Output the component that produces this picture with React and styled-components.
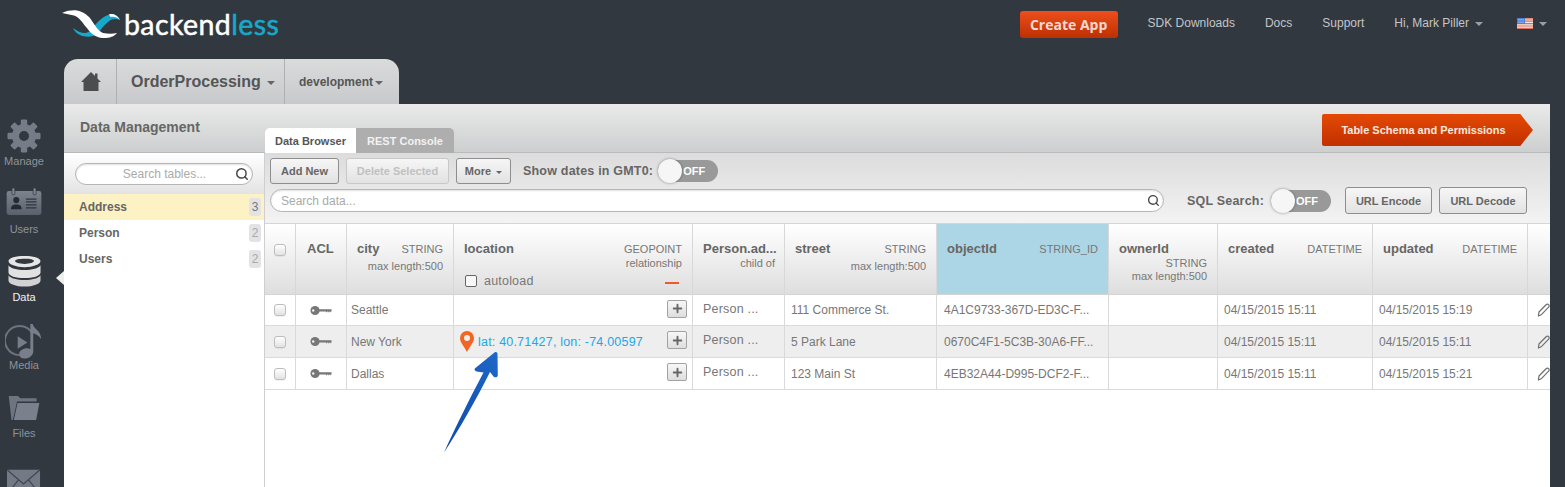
import React from "react";
import styled, { createGlobalStyle } from "styled-components";
import { Search, Plus } from "lucide-react";

const Global = createGlobalStyle`
  html, body { margin: 0; padding: 0; height: 487px; overflow: hidden; background: #323840; }
  body { font-family: "Liberation Sans", Arial, sans-serif; }
  * { box-sizing: border-box; }
`;

const Page = styled.div`
  width: 1565px; height: 487px; overflow: hidden; position: relative;
  display: flex; flex-direction: column; background: #323840;
`;
const TopBar = styled.header`
  height: 59px; flex: none; display: flex; align-items: flex-start; padding: 10px 18px 0 62px;
`;
const Logo = styled.div`display: flex; align-items: flex-start; gap: 2px;`;
const LogoText = styled.div`
  font: 400 28.5px/30px Lato, sans-serif; color: #fff; letter-spacing: .4px; margin-top: -1px;
  -webkit-text-stroke: .5px currentColor;
  span { color: #17a9c9; }
`;
const Nav = styled.nav`
  margin-left: auto; display: flex; align-items: center; height: 27px; margin-top: 1px;
`;
const CreateApp = styled.button`
  width: 98px; height: 27px; border: 0; border-radius: 3px; padding: 0; margin-right: 30px;
  background: linear-gradient(#ee4e1c, #bd3002); color: #f1d9cf;
  font: 700 14px "Open Sans", sans-serif;
`;
const NavLink = styled.span`
  font-size: 12px; color: #c2c5c9; margin-right: ${p => p.$mr}px; display: flex; align-items: center; margin-top: -3px;
`;
const Caret = styled.i`
  display: inline-block; width: 0; height: 0; margin-left: ${p => p.$ml ?? 6}px; margin-top: 2px;
  border-left: ${p => p.$s ?? 4}px solid transparent; border-right: ${p => p.$s ?? 4}px solid transparent;
  border-top: ${p => p.$s ?? 4}px solid ${p => p.$c ?? "#9a9da2"};
`;

const AppTabs = styled.div`
  flex: none; height: 45px; width: 335px; margin-left: 64px; display: flex; align-items: stretch;
  border-radius: 14px 14px 0 0; background: linear-gradient(#dadbdb, #c8c9cb); color: #555;
`;
const AppTab = styled.div`
  width: ${p => p.$w}px; flex: none; display: flex; align-items: center; padding-left: ${p => p.$pl}px;
  border-right: ${p => (p.$div ? "1px solid #aeb0b2" : "0")};
  font-weight: 700; font-size: ${p => p.$fs}px;
`;

const Workspace = styled.div`flex: 1; display: flex; min-height: 0;`;
const SideNav = styled.aside`
  width: 64px; flex: none; padding-top: 14px; display: flex; flex-direction: column;
`;
const SideItem = styled.div`
  width: 64px; height: 68px; flex: none; display: flex; flex-direction: column; align-items: center; position: relative;
  padding-right: 16px;
  color: ${p => (p.$active ? "#f2f2f2" : "#8e939b")};
  font-size: 11px;
  svg { display: block; flex: none; }
`;
const IconBox = styled.div`
  height: 36px; width: 48px; display: flex; justify-content: center; align-items: center; flex: none;
  padding-top: ${p => p.$pt ?? 0}px; padding-bottom: ${p => p.$pb ?? 0}px;
`;
const SideLabel = styled.div`line-height: 14px;`;
const Pointer = styled.i`
  position: absolute; right: 0; top: 17px; width: 0; height: 0;
  border-top: 7px solid transparent; border-bottom: 7px solid transparent; border-right: 8px solid #eeeeec;
`;

const Panel = styled.main`
  width: 1486px; flex: none; background: #fff; display: flex; flex-direction: column; min-height: 0;
`;
const PanelHead = styled.div`
  height: 49px; flex: none; display: flex; align-items: flex-start;
  background: linear-gradient(#e9eae9, #cdcecf); border-bottom: 1px solid #b9babb;
`;
const PanelTitle = styled.div`
  width: 201px; flex: none; font-size: 14px; font-weight: 700; color: #666; padding: 15px 0 0 16px;
`;
const Tabs = styled.div`
  display: flex; align-self: flex-end; height: 25px; border-radius: 5px 5px 0 0; overflow: hidden; margin-bottom: -1px;
`;
const Tab = styled.div`
  width: ${p => p.$w}px; display: flex; align-items: center; justify-content: center;
  font-size: 11px; font-weight: 700;
  background: ${p => (p.$on ? "#fff" : "#aeaeae")}; color: ${p => (p.$on ? "#555" : "#f2f2f2")};
`;
const SchemaButton = styled.button`
  margin: 10px 17px 0 auto; width: 211px; height: 32px; border: 0; padding: 0 8px 0 0;
  background: linear-gradient(#e44a05, #c23000); color: #fbe9df;
  font: 700 11px "Liberation Sans", sans-serif;
  clip-path: polygon(0 0, 94% 0, 100% 50%, 94% 100%, 0 100%); border-radius: 2px;
`;

const Body = styled.div`flex: 1; display: flex; min-height: 0;`;
const Tables = styled.div`
  width: 201px; flex: none; border-right: 1px solid #cfcfcf; display: flex; flex-direction: column;
`;
const TablesSearch = styled.div`
  height: 41px; flex: none; padding: 10px 11px 0; background: linear-gradient(#fff, #e3e3e3);
`;
const SearchPill = styled.div`
  height: ${p => p.$h}px; background: #fff; border: 1.5px solid #b5b5b5; border-radius: 12px;
  box-shadow: inset 0 1px 2px rgba(0,0,0,.12); display: flex; align-items: center; padding: 0 3px 0 10px;
  color: #aaa; font-size: ${p => p.$fs}px;
  flex: none;
  width: ${p => (p.$w ? p.$w + "px" : "auto")};
  span { flex: 1; text-align: ${p => p.$align}; padding-left: ${p => p.$pl ?? 0}px; }
  svg { flex: none; color: #444; }
`;
const TableRow = styled.div`
  height: 26px; flex: none; display: flex; align-items: center; padding: 0 3px 0 15px;
  font-size: 12px; font-weight: 700; color: #666;
  background: ${p => (p.$on ? "#fdf2c3" : "#fff")};
`;
const Badge = styled.span`
  margin-left: auto; width: 12px; height: 18px; border-radius: 3px; background: #e3e3e6; color: ${p => (p.$on ? "#777" : "#aaa")};
  font-size: 12px; font-weight: 400; text-align: center; line-height: 18px;
`;

const Main = styled.div`flex: 1; min-width: 0; display: flex; flex-direction: column;`;
const Toolbar = styled.div`
  height: 71px; flex: none; padding: 5px 0 0 5px; background: linear-gradient(#dcdcdc, #f3f3f3);
  display: flex; flex-direction: column; border-bottom: 1px solid #d6d6d6;
`;
const ToolRow = styled.div`display: flex; align-items: center; height: ${p => p.$h}px; margin-top: ${p => p.$mt ?? 0}px;`;
const ToolButton = styled.button`
  width: ${p => p.$w}px; height: ${p => p.$h ?? 26}px; margin-right: ${p => p.$mr ?? 7}px; flex: none; padding: 0;
  border: 1px solid ${p => (p.$off ? "#c8c8c8" : "#8e8e8e")}; border-radius: 3px;
  background: linear-gradient(#f6f6f6, #e2e2e2);
  color: ${p => (p.$off ? "#c0c0c0" : "#666")};
  font: 700 11px "Liberation Sans", sans-serif;
  display: flex; align-items: center; justify-content: center;
`;
const ToolLabel = styled.span`
  font-size: 12.5px; font-weight: 700; color: #666; letter-spacing: .2px; margin-left: ${p => p.$ml}px; margin-right: ${p => p.$mr}px; white-space: nowrap;
`;
const Toggle = styled.div`
  width: 60px; height: 22px; border-radius: 11px; background: #999; position: relative; flex: none;
  color: #fff; font-size: 11px; font-weight: 700; line-height: 22px; padding-left: 25px;
  margin-right: ${p => p.$mr ?? 0}px;
  &::before {
    content: ""; position: absolute; left: 0; top: -1px; width: 24px; height: 24px; border-radius: 50%;
    background: #f6f6f6; box-shadow: 0 0 3px rgba(0,0,0,.4);
  }
`;

const cols = "31px 51px 107px 239px 92px 152px 172px 109px 155px 155px 22px";
const HeadGrid = styled.div`
  height: 71px; flex: none; display: grid; grid-template-columns: ${cols};
  background: linear-gradient(#fff, #dedede); border-bottom: 1px solid #d4d4d4;
`;
const HeadCell = styled.div`
  border-right: 1px solid #d8d8d8; padding: 17px ${p => p.$pr ?? 10}px 0 ${p => p.$pl ?? 10}px; color: #777; font-size: 11px; position: relative;
  background: ${p => (p.$hl ? "#acd6e6" : "transparent")};
  &:last-child { border-right: 0; }
`;
const HeadTop = styled.div`display: flex; justify-content: space-between; align-items: baseline; line-height: 16px;
  b { font-size: 13px; color: #666; white-space: nowrap; }
`;
const HeadSub = styled.div`text-align: right; line-height: 13px; margin-top: ${p => p.$mt ?? 0}px; white-space: nowrap;`;
const HeadCheck = styled.div`padding-top: 4px; margin-top: -1px;`;
const CheckBox = styled.i`
  display: block; width: 12px; height: 12px; border-radius: 3px; border: 1px solid #bdbdbd;
  background: linear-gradient(#fff, #e2e2e2); box-shadow: 0 1px 0 rgba(0,0,0,.05);
`;
const Autoload = styled.div`
  position: absolute; left: 11px; top: 50px; display: flex; align-items: center; gap: 7px; font-size: 12.5px; color: #777; letter-spacing: .2px;
  i { display: block; width: 12px; height: 12px; border: 1px solid #666; border-radius: 2px; background: #f8f8f8; }
`;
const Dash = styled.i`position: absolute; right: 13px; top: 58px; width: 14px; height: 2px; background: #f2592a;`;

const RowGrid = styled.div`
  height: ${p => p.$h}px; flex: none; display: grid; grid-template-columns: ${cols};
  background: ${p => (p.$alt ? "#eeeeee" : "#fff")}; border-bottom: 1px solid #dadada;
`;
const Cell = styled.div`
  border-right: 1px solid #dadada; padding-left: ${p => p.$pl ?? 7}px; display: flex; align-items: center;
  justify-content: ${p => (p.$center ? "center" : "flex-start")};
  padding-right: ${p => p.$pr ?? 0}px;
  font-size: 12px; color: #777; white-space: nowrap; overflow: hidden;
  &:last-child { border-right: 0; }
`;
const Geo = styled.span`color: #22a7e6; font-size: 12.5px; margin-left: 4px; letter-spacing: .2px;`;
const PlusButton = styled.button`
  margin-left: auto; margin-bottom: 3px; width: 20px; height: 18px; border: 1px solid #a2a2a2; border-radius: 2px; padding: 0;
  background: linear-gradient(#f7f7f7, #dedede); color: #666; display: flex; align-items: center; justify-content: center;
`;
const PersonText = styled.span`font-size: 12.5px; margin-bottom: 3px; letter-spacing: .2px;`;
const Arrow = styled.svg`position: absolute; left: 440px; top: 345px; pointer-events: none;`;

const Gear = () => {
  const teeth = [0, 45, 90, 135, 180, 225, 270, 315];
  return (
    <svg width="34" height="34" viewBox="-17 -17 34 34">
      <g fill="#767c87">
        {teeth.map(t => <rect key={t} x="-3.2" y="-16.5" width="6.4" height="8" rx="1.3" transform={`rotate(${t})`} />)}
      </g>
      <circle r="8.5" fill="none" stroke="#767c87" strokeWidth="7" />
      <circle r="4.2" fill="#323840" />
    </svg>
  );
};
const Card = () => (
  <svg width="36" height="27" viewBox="0 0 36 28">
    <defs><linearGradient id="c" x1="0" y1="0" x2="0" y2="1"><stop offset="0" stopColor="#7e848e" /><stop offset="1" stopColor="#5b616c" /></linearGradient></defs>
    <rect x="0" y="3" width="36" height="25" rx="2.5" fill="url(#c)" />
    <rect x="5.5" y="0" width="3" height="7" rx="1" fill="#838993" stroke="#323840" strokeWidth=".8" />
    <rect x="27.5" y="0" width="3" height="7" rx="1" fill="#838993" stroke="#323840" strokeWidth=".8" />
    <circle cx="10" cy="12.5" r="3.2" fill="#262b32" />
    <path d="M4.5 22c0-4 2-5 5.5-5s5.500 1 5.500 5z" fill="#262b32" />
    <path d="M20 11.500h11M20 14.500h11M20 17.500h11M20 20.500h11" stroke="#30353d" strokeWidth="1.300" />
  </svg>
);
const Db = () => (
  <svg width="35" height="32" viewBox="0 0 36 34">
    <path d="M1 6.500C1 2.800 9 1 18 1s17 1.800 17 5.500S27 13 18 13 1 10.200 1 6.500zm7 0c0 1.700 4 3 10 3s10-1.300 10-3-4-2.500-10-2.500S8 4.800 8 6.500z" fill="#e6e6e6" fillRule="evenodd" />
    <path d="M1 11c2 3.500 9 5 17 5s15-1.500 17-5v7.500c0 3.700-8 6-17 6s-17-2.300-17-6z" fill="#e1e1e1" />
    <path d="M1 21.500c2 3.500 9 5 17 5s15-1.500 17-5V27c0 3.700-8 6.500-17 6.500S1 30.700 1 27z" fill="#d2d2d2" />
  </svg>
);
const Media = () => (
  <svg width="39" height="37" viewBox="0 0 40 38">
    <path d="M28 10.500A15 15 0 1 0 15 33" fill="none" stroke="#6e747f" strokeWidth="2" />
    <path d="M13 13.500l10 6.500-10 6.500z" fill="#777d88" />
    <path d="M26 1h2.500c.5 5 9 6.500 8.500 16-1-3-4.500-5.500-8-6.500V29c0 4.500-4.500 7.500-9 7.500-3.500 0-5.500-2-5.500-4.500 0-3.500 4-6 8-6 1.300 0 2.500.2 3.500.7z" fill="#797f8a" />
  </svg>
);
const Folder = () => (
  <svg width="33" height="26" viewBox="0 0 34 28">
    <path d="M0 1h10l2.500 2.500H30V7H9L4.500 27H3z" fill="#6f7580" />
    <path d="M9.500 8.500H33L29.500 27H5.500z" fill="#7b818c" />
  </svg>
);
const Mail = () => (
  <svg width="34" height="28" viewBox="0 0 36 28">
    <rect y="1" width="35" height="27" fill="#747a85" />
    <path d="M0 1l17.500 15L35 1M0 27l12-15M35 27L23 12" fill="none" stroke="#3f454e" strokeWidth="1.200" />
  </svg>
);
const Key = () => (
  <svg width="22" height="11" viewBox="0 0 24 12">
    <circle cx="5.500" cy="6" r="5" fill="#777" />
    <circle cx="3.500" cy="6" r="1.300" fill="#f4f4f4" />
    <path d="M9 4.500h14.500v2.500h-1v1h-1V7h-1v1h-1V7h-1v1h-1V7H9z" fill="#777" />
  </svg>
);
const Pin = () => (
  <svg width="14" height="21" viewBox="0 0 14 21">
    <path fillRule="evenodd" d="M7 0a7 7 0 0 1 7 7c0 4.500-4.500 9-7 14C4.500 16 0 11.500 0 7a7 7 0 0 1 7-7zm0 4a3 3 0 1 0 0 6 3 3 0 0 0 0-6z" fill="#f26522" />
  </svg>
);
const Home = () => (
  <svg width="20" height="19" viewBox="0 0 20 19">
    <path d="M10 0l4 4V1.500h2.500v5L20 10h-2.500v9h-15v-9H0z" fill="#4d4d4d" />
  </svg>
);
const Flag = () => (
  <svg width="16" height="11" viewBox="0 0 16 11" style={{ display: "block" }}>
    <rect width="16" height="11" fill="#f2e7e4" />
    <path d="M0 .8h16M0 3.200h16M0 5.600h16M0 8h16M0 10.300h16" stroke="#d9705e" strokeWidth="1.200" />
    <rect width="8" height="6" fill="#4f7fd6" />
    <path d="M1.500 1.500h5M1.500 3h5M1.500 4.500h5" stroke="#dfe8fa" strokeWidth=".7" strokeDasharray="1 1" />
  </svg>
);
const PencilIcon = () => (
  <svg width="14" height="16" viewBox="0 0 14 16" fill="none" stroke="#707070" strokeWidth="1.300" strokeLinejoin="round" style={{ display: "block" }}>
    <path d="M1.500 14.500l.6-4.300L9.800 2.300c.9-.9 2.100-.8 2.800 0 .7.700.7 1.800-.1 2.600L5 12.800z" />
  </svg>
);
const LogoMark = () => (
  <svg width="60" height="30" viewBox="0 0 60 30">
    <path d="M11 18C15 21 19 23 23 23C25 23 27 22 29 20C34 14 40 6 49 4C53 3.500 56 6 58 10C53 8 49 9 46 12C42 15 39 19 36 24L31 26C26 27.500 15 27 11 18Z" fill="#17a9c9" />
    <path d="M47 4.300C51 3.200 55.500 5 58 10C55 7.200 51.500 6.200 48.500 7Z" fill="#fff" />
    <path d="M0 3C5 .5 11 0 15 .5C21 1.500 25 5 28 8C32 14 36 21 41 23C46 24 51 24 55 23C52 27 46 28.500 40 28C32 27 28 22 24 17C20 12 17 7 12 5.500C8 4.500 4 4 0 3Z" fill="#fff" />
  </svg>
);

const rows = [
  { city: "Seattle", street: "111 Commerce St.", id: "4A1C9733-367D-ED3C-F...", upd: "04/15/2015 15:19" },
  { city: "New York", street: "5 Park Lane", id: "0670C4F1-5C3B-30A6-FF...", upd: "04/15/2015 15:11", geo: true, alt: true },
  { city: "Dallas", street: "123 Main St", id: "4EB32A44-D995-DCF2-F...", upd: "04/15/2015 15:21" },
];

export default function App() {
  return (
    <Page>
      <Global />
      <TopBar>
        <Logo>
          <LogoMark />
          <LogoText>backend<span>less</span></LogoText>
        </Logo>
        <Nav>
          <CreateApp>Create App</CreateApp>
          <NavLink $mr={30}>SDK Downloads</NavLink>
          <NavLink $mr={30}>Docs</NavLink>
          <NavLink $mr={30}>Support</NavLink>
          <NavLink $mr={34}>Hi, Mark Piller<Caret /></NavLink>
          <NavLink $mr={0}><Flag /><Caret /></NavLink>
        </Nav>
      </TopBar>
      <AppTabs>
        <AppTab $w={53} $pl={17} $div><Home /></AppTab>
        <AppTab $w={168} $pl={14} $div $fs={16}>OrderProcessing<Caret $ml={6} $s={4} $c="#666" /></AppTab>
        <AppTab $w={114} $pl={14} $fs={12}>development<Caret $ml={2} $s={4} $c="#666" /></AppTab>
      </AppTabs>
      <Workspace>
        <SideNav>
          <SideItem><IconBox><Gear /></IconBox><SideLabel>Manage</SideLabel></SideItem>
          <SideItem><IconBox $pb={5}><Card /></IconBox><SideLabel>Users</SideLabel></SideItem>
          <SideItem $active><IconBox $pb={2}><Db /></IconBox><SideLabel>Data</SideLabel><Pointer /></SideItem>
          <SideItem><IconBox $pt={2}><Media /></IconBox><SideLabel>Media</SideLabel></SideItem>
          <SideItem><IconBox><Folder /></IconBox><SideLabel>Files</SideLabel></SideItem>
          <SideItem><IconBox $pt={11}><Mail /></IconBox></SideItem>
        </SideNav>
        <Panel>
          <PanelHead>
            <PanelTitle>Data Management</PanelTitle>
            <Tabs>
              <Tab $on $w={91}>Data Browser</Tab>
              <Tab $w={98}>REST Console</Tab>
            </Tabs>
            <SchemaButton>Table Schema and Permissions</SchemaButton>
          </PanelHead>
          <Body>
            <Tables>
              <TablesSearch>
                <SearchPill $h={22} $fs={12} $align="center" $pl={8}><span>Search tables...</span><Search size={14} strokeWidth={2.500} /></SearchPill>
              </TablesSearch>
              <TableRow $on>Address<Badge $on>3</Badge></TableRow>
              <TableRow>Person<Badge>2</Badge></TableRow>
              <TableRow>Users<Badge>2</Badge></TableRow>
            </Tables>
            <Main>
              <Toolbar>
                <ToolRow $h={26}>
                  <ToolButton $w={69}>Add New</ToolButton>
                  <ToolButton $w={103} $off>Delete Selected</ToolButton>
                  <ToolButton $w={55} $mr={0}>More<Caret $ml={5} $s={3} $c="#666" /></ToolButton>
                  <ToolLabel $ml={12} $mr={5}>Show dates in GMT0:</ToolLabel>
                  <Toggle>OFF</Toggle>
                </ToolRow>
                <ToolRow $h={27} $mt={3}>
                  <SearchPill $h={23} $fs={12} $align="left" $w={894}><span>Search data...</span><Search size={13} strokeWidth={2.500} /></SearchPill>
                  <ToolLabel $ml={23} $mr={7}>SQL Search:</ToolLabel>
                  <Toggle $mr={14}>OFF</Toggle>
                  <ToolButton $w={87} $h={27}>URL Encode</ToolButton>
                  <ToolButton $w={88} $h={27} $mr={0}>URL Decode</ToolButton>
                </ToolRow>
              </Toolbar>
              <HeadGrid>
                <HeadCell $pl={9} $pr={0}><HeadCheck><CheckBox /></HeadCheck></HeadCell>
                <HeadCell $pl={11} $pr={0}><HeadTop><b>ACL</b></HeadTop></HeadCell>
                <HeadCell><HeadTop><b>city</b><span>STRING</span></HeadTop><HeadSub $mt={3}>max length:500</HeadSub></HeadCell>
                <HeadCell $pr={10}>
                  <HeadTop><b>location</b><span>GEOPOINT</span></HeadTop>
                  <HeadSub>relationship</HeadSub>
                  <Autoload><i />autoload</Autoload>
                  <Dash />
                </HeadCell>
                <HeadCell $pr={9}><HeadTop><b>Person.ad...</b></HeadTop><HeadSub>child of</HeadSub></HeadCell>
                <HeadCell><HeadTop><b>street</b><span>STRING</span></HeadTop><HeadSub $mt={3}>max length:500</HeadSub></HeadCell>
                <HeadCell $hl><HeadTop><b>objectId</b><span>STRING_ID</span></HeadTop></HeadCell>
                <HeadCell><HeadTop><b>ownerId</b></HeadTop><HeadSub>STRING</HeadSub><HeadSub>max length:500</HeadSub></HeadCell>
                <HeadCell><HeadTop><b>created</b><span>DATETIME</span></HeadTop></HeadCell>
                <HeadCell><HeadTop><b>updated</b><span>DATETIME</span></HeadTop></HeadCell>
                <HeadCell />
              </HeadGrid>
              {rows.map((r, i) => (
                <RowGrid key={r.city} $alt={r.alt} $h={i === 0 ? 31 : 32}>
                  <Cell $center $pl={0}><CheckBox /></Cell>
                  <Cell $center $pl={0}><Key /></Cell>
                  <Cell $pl={4}>{r.city}</Cell>
                  <Cell $pl={6} $pr={5}>
                    {r.geo && <Pin />}
                    {r.geo && <Geo>lat: 40.71427, lon: -74.00597</Geo>}
                    <PlusButton><Plus size={13} strokeWidth={3.500} /></PlusButton>
                  </Cell>
                  <Cell $pl={10}><PersonText>Person ...</PersonText></Cell>
                  <Cell $pl={6}>{r.street}</Cell>
                  <Cell>{r.id}</Cell>
                  <Cell />
                  <Cell $pl={6}>04/15/2015 15:11</Cell>
                  <Cell $pl={6}>{r.upd}</Cell>
                  <Cell $pl={9}><PencilIcon /></Cell>
                </RowGrid>
              ))}
            </Main>
          </Body>
        </Panel>
      </Workspace>
      <Arrow width="70" height="115" viewBox="440 345 70 115">
        <defs>
          <linearGradient id="a" x1="0" y1="1" x2="1" y2="0"><stop offset="0" stopColor="#0d4aa8" /><stop offset="1" stopColor="#1e68c8" /></linearGradient>
        </defs>
        <path d="M444 452.500C456 426 470 398 483.500 372.500L476.500 371.500C474 370.500 474 368.500 476 367.500L494.500 352.500C496 351.500 497.500 352.500 497.500 354L497.800 375C497.800 377.500 495 378 493.500 376.500L490 372C476 400 460 428 444 452.500Z" fill="url(#a)" />
      </Arrow>
    </Page>
  );
}
